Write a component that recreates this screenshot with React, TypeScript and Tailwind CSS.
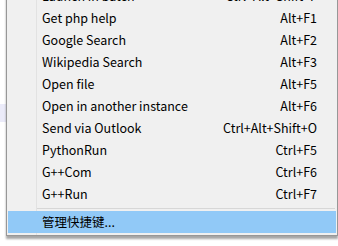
import React from 'react';

type Item = { label: string; keys?: string };

const items: Item[] = [
  { label: 'Launch in batch', keys: 'Ctrl+Alt+Shift+F' },
  { label: 'Get php help', keys: 'Alt+F1' },
  { label: 'Google Search', keys: 'Alt+F2' },
  { label: 'Wikipedia Search', keys: 'Alt+F3' },
  { label: 'Open file', keys: 'Alt+F5' },
  { label: 'Open in another instance', keys: 'Alt+F6' },
  { label: 'Send via Outlook', keys: 'Ctrl+Alt+Shift+O' },
  { label: 'PythonRun', keys: 'Ctrl+F5' },
  { label: 'G++Com', keys: 'Ctrl+F6' },
  { label: 'G++Run', keys: 'Ctrl+F7' },
];

function Row({ label, keys }: Item) {
  return (
    <div className="flex h-[22px] items-center justify-between pl-[35px] pr-[20px]">
      <span>{label}</span>
      {keys && <span>{keys}</span>}
    </div>
  );
}

export default function App() {
  return (
    <div
      className="relative h-[246px] w-[338px] overflow-hidden bg-white text-[12.5px] text-black"
      style={{ fontFamily: '"Noto Sans CJK SC", "Noto Sans", sans-serif' }}
    >
      {/* parent window selection peeking out behind the menu */}
      <div className="absolute left-0 top-[104px] h-[18px] w-[6px] bg-[#ebebf9]" />

      <div className="ml-[6px] mt-[-16px] w-[332px]">
        <div className="relative border border-[#979797] bg-[#f0f0f0] pb-[2px] shadow-[0_3px_2px_rgba(0,0,0,0.35)]">
          {/* icon gutter line */}
          <div className="absolute bottom-0 left-[29px] top-0 w-px bg-[#e2e2e2]" />
          <div className="relative">
            {items.map((it) => (
              <Row key={it.label} {...it} />
            ))}
            <div className="flex h-[6px] items-center pl-[30px] pr-[2px]">
              <div className="h-px w-full bg-[#d7d7d7]" />
            </div>
            <div className="px-[1px]">
              <div className="flex h-[22px] items-center bg-[#91c9f7] pl-[34px]">管理快捷键...</div>
            </div>
          </div>
        </div>
      </div>
    </div>
  );
}
